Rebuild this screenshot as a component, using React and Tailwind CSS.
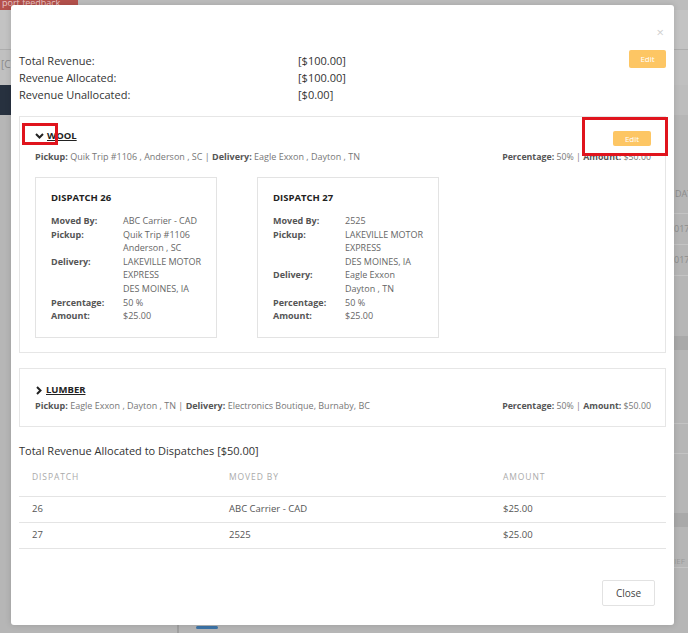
import React from 'react';

const ChevronDown = () => (
  <svg width="9" height="6" viewBox="0 0 9 6" className="shrink-0">
    <path d="M1 1 L4.5 4.5 L8 1" fill="none" stroke="#222" strokeWidth="2" />
  </svg>
);

const ChevronRight = () => (
  <svg width="6" height="9" viewBox="0 0 6 9" className="shrink-0">
    <path d="M1 1 L4.5 4.5 L1 8" fill="none" stroke="#222" strokeWidth="2" />
  </svg>
);

const EditButton = () => (
  <button className="flex h-[15px] w-[38px] items-center justify-center rounded-[2px] bg-[#fdc664] text-[8px] text-white">
    Edit
  </button>
);

const Background = () => (
  <div className="flex h-full w-full flex-col">
    <div className="h-[10px] shrink-0 bg-[#bdbdbd]">
      <div className="h-[10px] w-[78px] overflow-hidden bg-[#b5514c] pl-[2px] text-[9px] leading-[6px] text-[#e9c7c5]">
        port feedback
      </div>
    </div>
    <div className="h-[40px] shrink-0 border-b border-[#adadad] bg-[#c3c3c3]" />
    <div className="flex h-[35px] shrink-0 items-center bg-[#c0c0c0] pb-[6px] pl-[1px] text-[10px] text-[#8a8a8a]">
      [C
    </div>
    <div className="flex h-[30px] shrink-0 bg-[#bdbdbd]">
      <div className="w-[200px] bg-[#27313f]" />
    </div>
    <div className="flex flex-1 flex-col bg-[#b6b6b6] pl-[674px] text-[9px] text-[#8c8c8c]">
      <div className="flex h-[98px] items-end pb-[13px] pl-[1px]">DAT</div>
      <div className="flex h-[31px] items-center border-t border-[#c4c4c4]">017</div>
      <div className="flex h-[31px] items-center border-t border-[#c4c4c4]">017</div>
      <div className="h-[61px] border-t border-[#c4c4c4]" />
      <div className="h-[14px] bg-[#a9a9a9]" />
      <div className="h-[73px]" />
      <div className="h-[30px] border-t border-[#c4c4c4]" />
      <div className="h-[60px] border-t border-[#c4c4c4]" />
      <div className="h-[14px] bg-[#a9a9a9]" />
      <div className="flex h-[40px] items-end text-[8px] text-[#9a9a9a]">IEF</div>
      <div className="flex-1 border-t border-[#c4c4c4]" />
    </div>
    <div className="relative h-0">
      <div className="absolute left-[177px] top-[-8px] h-[8px] w-[2px] bg-[#a0a0a0]" />
      <div className="absolute left-[196px] top-[-7px] h-[3px] w-[22px] rounded-full bg-[#3c74a8]" />
    </div>
  </div>
);

const Row = ({ label, lines }) => (
  <div className="flex">
    <div className="w-[72px] shrink-0 font-bold text-[#555]">{label}</div>
    <div className="whitespace-nowrap text-[#666]">
      {lines.map((l) => (
        <div key={l}>{l}</div>
      ))}
    </div>
  </div>
);

const DispatchCard = ({ id, movedBy, pickup, delivery }) => (
  <div className="h-[161px] w-[182px] border border-[#e3e3e3] pl-[15px] pr-[4px] pt-[14px] text-[9px] leading-[13.6px]">
    <div className="mb-[10px] text-[9.5px] font-bold leading-[12px] text-[#222]">DISPATCH {id}</div>
    <Row label="Moved By:" lines={[movedBy]} />
    <Row label="Pickup:" lines={pickup} />
    <Row label="Delivery:" lines={delivery} />
    <Row label="Percentage:" lines={['50 %']} />
    <Row label="Amount:" lines={['$25.00']} />
  </div>
);

const RouteLine = ({ pickup, delivery }) => (
  <div className="mt-[5px] flex justify-between whitespace-nowrap text-[9px] leading-[12px] text-[#777]">
    <div>
      <span className="font-bold text-[#555]">Pickup:</span> {pickup} |{' '}
      <span className="font-bold text-[#555]">Delivery:</span> {delivery}
    </div>
    <div className="text-[8.8px]">
      <span className="font-bold text-[#555]">Percentage:</span> 50% |{' '}
      <span className="font-bold text-[#555]">Amount:</span> $50.00
    </div>
  </div>
);

const Modal = () => (
  <div className="absolute left-[11px] top-[5px] flex h-[620px] w-[663px] flex-col rounded-[3px] bg-white px-[8px] shadow-[0_0_6px_rgba(0,0,0,0.15)]">
    <div className="flex h-[45px] shrink-0 justify-end pr-[2px] pt-[21px]">
      <span className="text-[13px] leading-[13px] text-[#cfcfcf]">×</span>
    </div>

    <div className="flex justify-between">
      <div className="mt-[2px] grid grid-cols-[279px_1fr] text-[11px] leading-[17px] text-[#333]">
        <div>Total Revenue:</div>
        <div>[$100.00]</div>
        <div>Revenue Allocated:</div>
        <div>[$100.00]</div>
        <div>Revenue Unallocated:</div>
        <div>[$0.00]</div>
      </div>
      <button className="flex h-[18px] w-[37px] items-center justify-center rounded-[2px] bg-[#fdc664] text-[8px] text-white">
        Edit
      </button>
    </div>

    <div className="relative mt-[13px] border border-[#e6e6e6] pb-[14px] pl-[15px] pr-[14px] pt-[14px]">
      <div className="flex h-[15px] items-start justify-between">
        <div className="flex items-center gap-[3px] text-[9.5px] font-bold leading-[10px] text-[#222]">
          <ChevronDown />
          <span className="underline underline-offset-1">WOOL</span>
        </div>
        <EditButton />
      </div>
      <RouteLine pickup="Quik Trip #1106 , Anderson , SC" delivery="Eagle Exxon , Dayton , TN" />
      <div className="mt-[14px] flex gap-[40px]">
        <DispatchCard
          id="26"
          movedBy="ABC Carrier - CAD"
          pickup={['Quik Trip #1106', 'Anderson , SC']}
          delivery={['LAKEVILLE MOTOR', 'EXPRESS', 'DES MOINES, IA']}
        />
        <DispatchCard
          id="27"
          movedBy="2525"
          pickup={['LAKEVILLE MOTOR', 'EXPRESS', 'DES MOINES, IA']}
          delivery={['Eagle Exxon', 'Dayton , TN']}
        />
      </div>
      <div className="absolute left-[2px] top-[6px] h-[22px] w-[36px] border-[3px] border-[#e0141d]" />
      <div className="absolute left-[562px] top-[0px] h-[39px] w-[86px] border-[3px] border-[#e0141d]" />
    </div>

    <div className="mt-[15px] border border-[#e6e6e6] pb-[14px] pl-[15px] pr-[14px] pt-[16px]">
      <div className="flex items-center gap-[4px] text-[9.5px] font-bold leading-[10px] text-[#222]">
        <span className="flex w-[7px] justify-end">
          <ChevronRight />
        </span>
        <span className="underline underline-offset-1">LUMBER</span>
      </div>
      <RouteLine pickup="Eagle Exxon , Dayton , TN" delivery="Electronics Boutique, Burnaby, BC" />
    </div>

    <div className="mt-[15px] text-[11px] leading-[17px] text-[#333]">
      Total Revenue Allocated to Dispatches [$50.00]
    </div>

    <div className="text-[9.5px] text-[#555]">
      <div className="flex h-[38px] items-center border-b border-[#e4e4e4] pl-[13px] text-[8.5px] tracking-[0.9px] text-[#aaa]">
        <div className="w-[197px]">DISPATCH</div>
        <div className="w-[274px]">MOVED BY</div>
        <div>AMOUNT</div>
      </div>
      {[
        ['26', 'ABC Carrier - CAD'],
        ['27', '2525'],
      ].map(([d, m]) => (
        <div key={d} className="flex h-[26px] items-center border-b border-[#e4e4e4] pl-[13px]">
          <div className="w-[197px]">{d}</div>
          <div className="w-[274px]">{m}</div>
          <div>$25.00</div>
        </div>
      ))}
    </div>

    <div className="mt-[31px] flex justify-end pr-[11px]">
      <button className="flex h-[26px] w-[53px] items-center justify-center rounded-[2px] border border-[#e2e2e2] bg-white text-[10px] text-[#444]">
        Close
      </button>
    </div>
  </div>
);

export default function App() {
  return (
    <div className="relative h-[633px] w-[688px] overflow-hidden bg-[#b6b6b6] font-['Open_Sans',sans-serif]">
      <Background />
      <Modal />
    </div>
  );
}
